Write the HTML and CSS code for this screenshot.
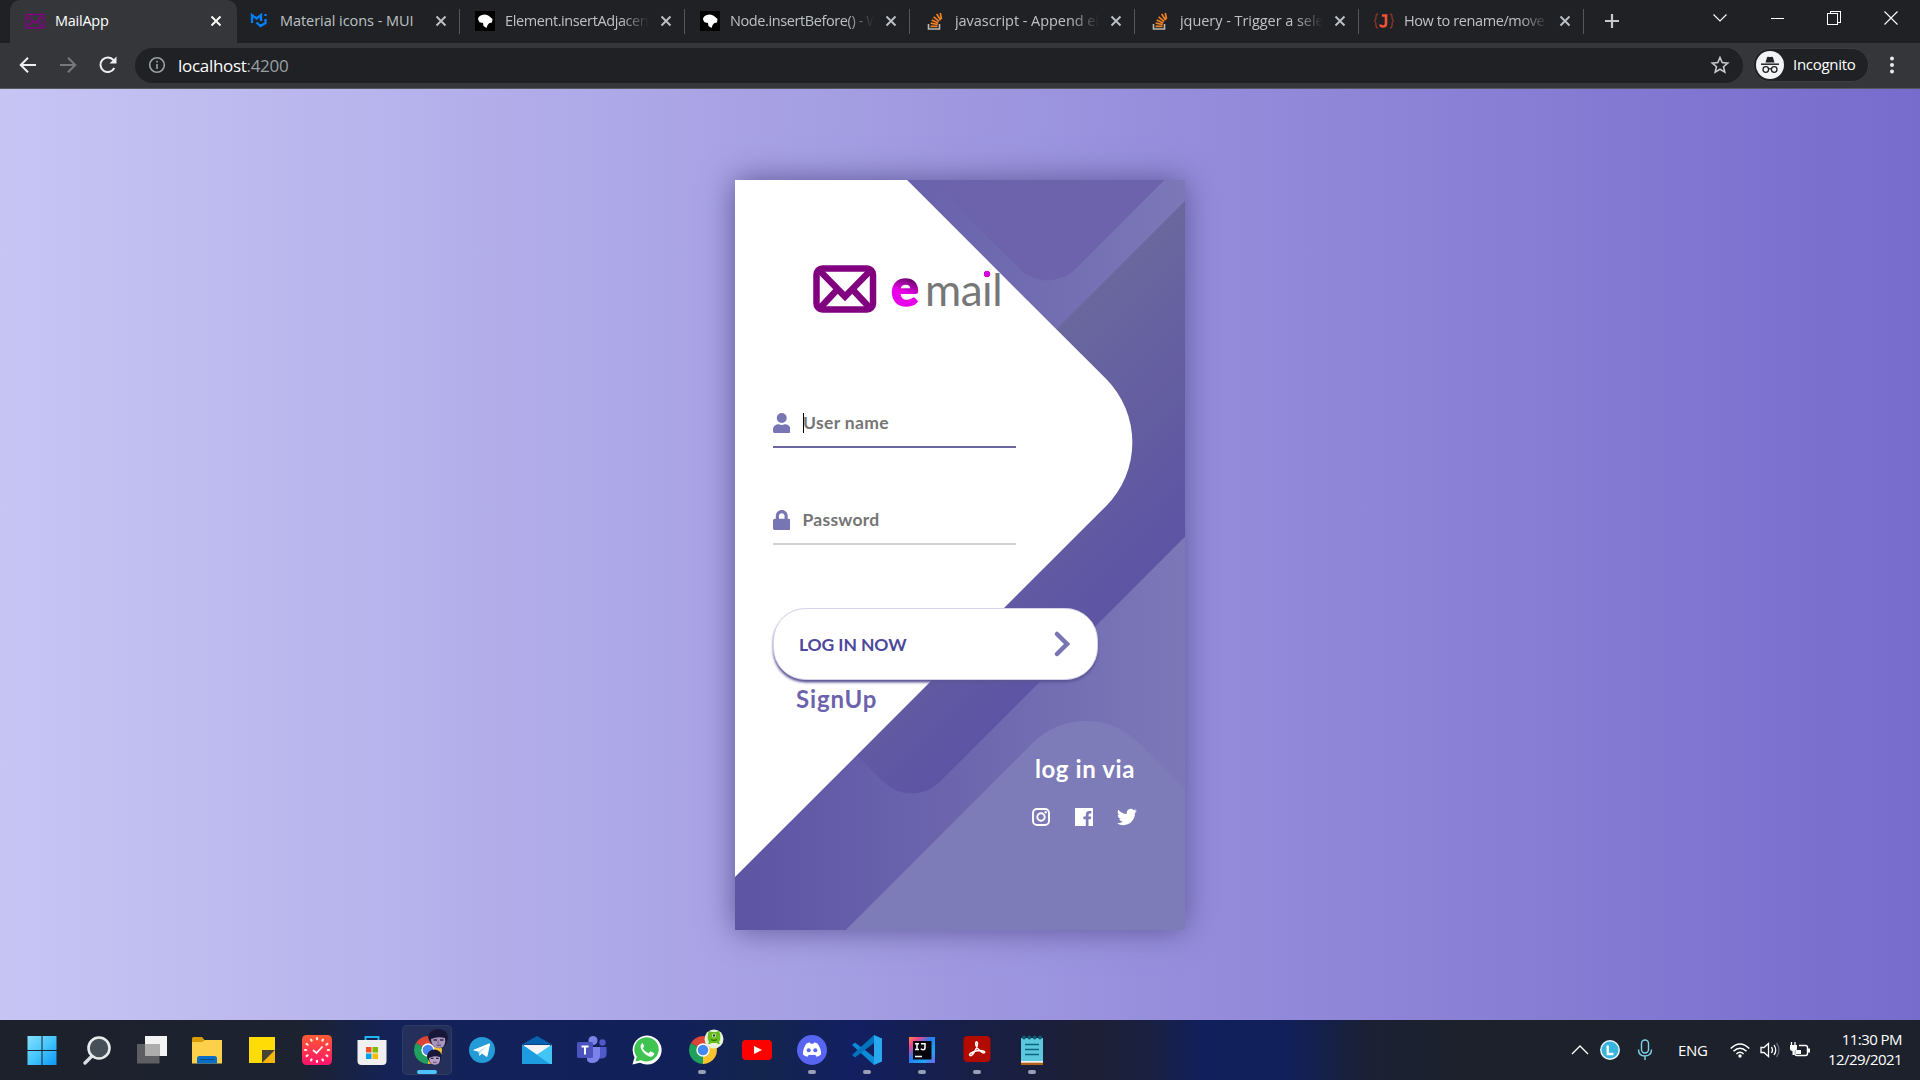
FILE: index.html
```
<!DOCTYPE html>
<html lang="en">
<head>
<meta charset="utf-8">
<title>MailApp</title>
<link rel="stylesheet" href="styles.css">
</head>
<body>
<svg width="0" height="0" class="defs" aria-hidden="true">
  <defs>
    <symbol id="x" viewBox="0 0 12 12"><path d="M1.5 1.5l9 9M10.5 1.5l-9 9" stroke="currentColor" stroke-width="1.9" fill="none"/></symbol>
    <symbol id="wp" viewBox="0 0 20 20"><path d="M0 0h20v20H0z" fill="#000"/><path d="M3 8.500Q3 5 7 4q4-1.500 7 1l3.500 3-.5 3.500-3 .8-1.500 2L11.500 17 8.500 15l-.5-3-3.500-.7z" fill="#fff"/></symbol>
    <symbol id="so" viewBox="0 0 20 20"><path d="M3.500 13v5h11v-5" fill="none" stroke="#bcbbbb" stroke-width="1.600"/><g stroke="#f48024" stroke-width="1.700" fill="none"><path d="M5.500 15.300h7M5.700 12.200l7 1.300M6.700 8.900l6.500 3M8.600 5.800l5.500 4.500M11.700 3l4 6.200M15.300 2l1.200 6"/></g></symbol>
    <symbol id="chrome" viewBox="0 0 30 30"><path d="M15 15L2.900 8A14 14 0 0 1 27.100 8z" fill="#dc4437"/><path d="M15 15L27.100 8A14 14 0 0 1 15 29z" fill="#fbc42f"/><path d="M15 15v14A14 14 0 0 1 2.900 8z" fill="#1fa15d"/><circle cx="15" cy="15" r="6.700" fill="#fff"/><circle cx="15" cy="15" r="5.300" fill="#4688f1"/></symbol>
  </defs>
</svg>

<header class="tabs">
  <div class="tab tab--active"><svg class="fav" viewBox="0 0 20 20"><g fill="none" stroke="#800080" stroke-width="1.600"><rect x="1" y="3.500" width="18" height="13.500" rx="2"/><path d="M3 5l7 7 7-7M3 15.500l4.500-5M17 15.500l-4.500-5"/></g></svg><span class="tab__title">MailApp</span><svg class="tab__x"><use href="#x"/></svg></div>
  <div class="tab"><svg class="fav" viewBox="0 0 20 20"><path d="M2 12V4l4.500 3.500L11 4v6M15.500 3v2M6.500 11.500l4 3.500 5-3V8M10.500 15v-2" fill="none" stroke="#007fff" stroke-width="2.300"/></svg><span class="tab__title tab__title--wide">Material icons - MUI</span><svg class="tab__x"><use href="#x"/></svg></div>
  <div class="tab"><svg class="fav"><use href="#wp"/></svg><span class="tab__title tab__title--fade">Element.insertAdjacen</span><svg class="tab__x"><use href="#x"/></svg></div>
  <div class="tab"><svg class="fav"><use href="#wp"/></svg><span class="tab__title tab__title--fade">Node.insertBefore() - W</span><svg class="tab__x"><use href="#x"/></svg></div>
  <div class="tab"><svg class="fav"><use href="#so"/></svg><span class="tab__title tab__title--fade tab__title--wide">javascript - Append el</span><svg class="tab__x"><use href="#x"/></svg></div>
  <div class="tab"><svg class="fav"><use href="#so"/></svg><span class="tab__title tab__title--fade tab__title--wide">jquery - Trigger a sele</span><svg class="tab__x"><use href="#x"/></svg></div>
  <div class="tab"><svg class="fav" viewBox="0 0 20 20"><g fill="none" stroke="#8c3325" stroke-width="1.400"><path d="M4 3Q2 3 2 6t-1.500 4Q2 11 2 14t2 3M16 3q2 0 2 3t1.500 4Q18 11 18 14t-2 3"/></g><path d="M8 4.500h5.500M12 4.500v8q0 3-3 3-2.500 0-2.500-2" fill="none" stroke="#f05033" stroke-width="2.600"/></svg><span class="tab__title tab__title--fade">How to rename/move</span><svg class="tab__x"><use href="#x"/></svg></div>
  <svg class="newtab" viewBox="0 0 16 16"><path d="M8 1v14M1 8h14" stroke="#c6c8cb" stroke-width="2.200"/></svg>
  <div class="winctl">
    <svg viewBox="0 0 16 16"><path d="M1.500 4.500L8 11l6.500-6.500" /></svg>
    <svg viewBox="0 0 16 16"><path d="M1.500 8.500h13" class="crisp"/></svg>
    <svg viewBox="0 0 16 16"><path d="M1.500 3.500h10v11h-10zM4.500 3.500v-2h10v11h-3" class="crisp"/></svg>
    <svg viewBox="0 0 16 16"><path d="M1.500 1.500l13 13M14.500 1.500l-13 13" /></svg>
  </div>
</header>

<nav class="toolbar">
  <svg class="nav-icon" viewBox="0 0 20 20"><path d="M18 10H3M10 2.700L2.700 10l7.300 7.300" stroke="#eceef0"/></svg>
  <svg class="nav-icon" viewBox="0 0 20 20"><path d="M2 10h15M10 2.700l7.300 7.300-7.300 7.300" stroke="#77787b"/></svg>
  <svg class="nav-icon" viewBox="0 0 20 20"><path d="M16.300 13A7.300 7.300 0 1 1 15.500 5.200L17 7" stroke="#eceef0"/><path d="M18.500 1.500v7h-7z" fill="#eceef0"/></svg>
  <div class="omnibox">
    <svg class="info" viewBox="0 0 18 18"><circle cx="9" cy="9" r="7.300"/><path d="M9 8v5M9 4.700v1.800"/></svg>
    <span class="url">localhost<span class="url__port">:4200</span></span>
    <svg class="star" viewBox="0 0 20 20"><path d="M10 2.500l2.200 5.100 5.500.5-4.200 3.600 1.300 5.400-4.800-2.900-4.800 2.900 1.300-5.400-4.200-3.600 5.500-.5z"/></svg>
  </div>
  <div class="incognito">
    <svg viewBox="0 0 28 28"><circle cx="14" cy="14" r="14" fill="#f1f3f4"/><path d="M9.500 11.500l1.500-5q.3-1 1.300-.7 1.700.6 3.400 0 1-.3 1.300.7l1.500 5z" fill="#202124"/><path d="M5 13.200h18" stroke="#202124" stroke-width="1.500"/><g fill="none" stroke="#202124" stroke-width="1.300"><circle cx="9.800" cy="18.500" r="2.800"/><circle cx="18.200" cy="18.500" r="2.800"/><path d="M12.600 18q1.400-.8 2.800 0"/></g></svg>
    <span>Incognito</span>
  </div>
  <svg class="dots" viewBox="0 0 6 20"><circle cx="3" cy="3.500" r="2"/><circle cx="3" cy="10" r="2"/><circle cx="3" cy="16.500" r="2"/></svg>
</nav>

<main class="page">
  <div class="screen">
    <svg class="screen__shapes" viewBox="0 0 360 600">
      <defs>
        <linearGradient id="band"><stop offset="0" stop-color="#6a679e"/><stop offset="1" stop-color="#5d54a4"/></linearGradient>
      </defs>
      <rect x="110" y="420" width="200" height="400" rx="60" fill="#7e7bb9" transform="rotate(45 210 620)"/>
      <rect x="170" y="-24" width="190" height="540" rx="32" fill="url(#band)" transform="rotate(45 265 246)"/>
      <rect x="140" y="-172" width="220" height="220" rx="32" fill="#6c63ac" transform="rotate(45 250 -62)"/>
      <path d="M-280-50H168A72 72 0 0 1 240 22V470H-280z" fill="#fff" transform="rotate(45 -20 210)"/>
    </svg>
    <div class="screen__content">
      <div class="logo">
        <svg class="logo__mark" viewBox="0 0 64 48"><rect x="3.500" y="3.500" width="56.500" height="41" rx="6" fill="none" stroke="#800080" stroke-width="6.500"/><path d="M7 6l25 25.500L57 6M7 43l16-17M57 43L41 26" fill="none" stroke="#800080" stroke-width="6.500"/></svg>
        <span class="logo__e">e</span><span class="logo__mail">ma<span class="logo__i">ı</span>l</span>
      </div>
      <form class="login">
        <label class="field field--focus">
          <svg viewBox="0 0 448 512"><path d="M224 256a128 128 0 1 0 0-256 128 128 0 0 0 0 256zm89.600 32h-16.700a174 174 0 0 1-145.800 0h-16.700C60.200 288 0 348.200 0 422.400V464c0 26.500 21.500 48 48 48h352c26.500 0 48-21.500 48-48v-41.600c0-74.200-60.200-134.400-134.400-134.400z"/></svg>
          <span class="caret"></span><span class="field__text">User name</span>
        </label>
        <label class="field">
          <svg viewBox="0 0 448 512"><path d="M400 224h-24v-72C376 68.200 307.800 0 224 0S72 68.200 72 152v72H48c-26.500 0-48 21.500-48 48v192c0 26.500 21.500 48 48 48h352c26.500 0 48-21.500 48-48V272c0-26.500-21.500-48-48-48zm-104 0H152v-72c0-39.700 32.300-72 72-72s72 32.300 72 72z"/></svg>
          <span class="field__text">Password</span>
        </label>
        <button type="button" class="submit"><span>Log in now</span><svg viewBox="0 0 16 26"><path d="M3 3l10 10L3 23"/></svg></button>
      </form>
      <a class="signup">SignUp</a>
      <div class="social">
        <h3>log in via</h3>
        <div class="social__icons">
          <svg viewBox="0 0 20 20"><g fill="none" stroke="#fff" stroke-width="1.900"><rect x="2" y="2" width="16" height="16" rx="4"/><circle cx="10" cy="10" r="3.700"/></g><circle cx="14.700" cy="5.300" r="1.200" fill="#fff"/></svg>
          <svg viewBox="0 0 20 20"><path d="M1 1h18v18h-4.500v-6.700h2.300l.4-2.700h-2.700V8q0-1.500 1.500-1.500h1.300V4h-2q-3.500 0-3.500 3.600v2H9.400v2.700h2.400V19H1z" fill="#fff"/></svg>
          <svg viewBox="0 0 24 24"><path d="M23.950 4.570a10 10 0 0 1-2.820.77 4.960 4.960 0 0 0 2.160-2.720c-.95.550-2 .950-3.130 1.180a4.920 4.920 0 0 0-8.380 4.480C7.690 8.090 4.070 6.130 1.640 3.160a4.920 4.920 0 0 0 1.520 6.570 4.900 4.900 0 0 1-2.230-.610v.060a4.920 4.920 0 0 0 3.950 4.830 5 5 0 0 1-2.210.080 4.940 4.940 0 0 0 4.600 3.420A9.870 9.870 0 0 1 0 19.540a14 14 0 0 0 7.550 2.210c9.050 0 14-7.500 14-13.980 0-.210 0-.420-.020-.630a9.940 9.940 0 0 0 2.420-2.570z" fill="#fff"/></svg>
        </div>
      </div>
    </div>
  </div>
</main>

<footer class="taskbar">
  <div class="apps">
    <div class="app"><svg viewBox="0 0 30 30"><defs><linearGradient id="win" x1="0" y1="0" x2="30" y2="30" gradientUnits="userSpaceOnUse"><stop stop-color="#8be2ff"/><stop offset=".5" stop-color="#45c6fb"/><stop offset="1" stop-color="#0c95f8"/></linearGradient></defs><path d="M.5 1h14v14H.5zM15.500 1h14v14h-14zM.5 16h14v14H.5zM15.500 16h14v14h-14z" fill="url(#win)"/></svg></div>
    <div class="app"><svg viewBox="0 0 30 30"><path d="M3 28l8-8" stroke="#dcdfe1" stroke-width="3.300" stroke-linecap="round"/><circle cx="17" cy="13" r="10.500" fill="#474f58" stroke="#e8eaec" stroke-width="2.600"/></svg></div>
    <div class="app"><svg viewBox="0 0 30 30"><path d="M8 1h22v20H8z" fill="#f3f3f3"/><path d="M0 9h22.500v19.500H0z" fill="#5c5e61"/><path d="M8 9h14.500v12H8z" fill="#adadad"/></svg></div>
    <div class="app"><svg viewBox="0 0 30 30"><path d="M0 3.500Q0 2 1.500 2H10l3 3.500V9H0z" fill="#d99b06"/><path d="M0 7h10l3-2h17v23.500H0z" fill="#fdd04c"/><path d="M5 28.500v-5q0-2.500 2.500-2.500h15q2.500 0 2.500 2.500v5z" fill="#0a6fc4"/><path d="M8 24.500h14" stroke="#064b8e"/></svg></div>
    <div class="app"><svg viewBox="0 0 30 30"><path d="M2 2h26v13L15 28H2z" fill="#ffdc05"/><path d="M15 15h13L15 28z" fill="#474334"/><path d="M28 15v13H15z" fill="#f4b60a"/></svg></div>
    <div class="app"><svg viewBox="0 0 30 30"><defs><linearGradient id="clk" x1="0" y1="0" x2="0" y2="1"><stop stop-color="#ff5b30"/><stop offset="1" stop-color="#ff126b"/></linearGradient></defs><rect width="30" height="30" rx="4.500" fill="url(#clk)"/><g stroke="#ffe9e6" stroke-width="2.200" stroke-linecap="round"><path d="M15 3v1.200M15 25.800V27M3 15h1.200M25.800 15H27M9 4.600l.6 1M20.400 24.400l.6 1M21 4.600l-.6 1M9.600 24.400l-.6 1M4.600 9l1 .6M24.400 20.400l1 .6M25.400 9l-1 .6M5.600 20.400l-1 .6"/></g><path d="M11 15l3.500 3 6-6.500" fill="none" stroke="#fff" stroke-width="1.700"/></svg></div>
    <div class="app"><svg viewBox="0 0 30 30"><path d="M8.500 6V2h13v4" fill="none" stroke="#23b4f2" stroke-width="2"/><path d="M.5 5h29v21q0 4-4 4h-21q-4 0-4-4z" fill="#f0f0f0"/><path d="M9 12h5.500v5.500H9z" fill="#f25022"/><path d="M15.500 12H21v5.500h-5.500z" fill="#7fba00"/><path d="M9 18.500h5.500V24H9z" fill="#05a0e6"/><path d="M15.500 18.500H21V24h-5.500z" fill="#ffb900"/></svg></div>
    <div class="app app--active"><svg class="wide" viewBox="0 0 40 40"><use href="#chrome" x="3" y="5" width="30" height="30"/><g><path d="M18 7q2-8 11-8 9 1 9 9l-2 7q-4 5-11 2-5-3-7-10z" fill="#18173a"/><path d="M21 9q6-3 14-1 1 6-2 9-4 2-8 0-4-3-4-8z" fill="#a795bb"/><path d="M23.500 10h3.500M30 10h3.500" stroke="#302649" stroke-width="1.400"/><path d="M28.500 10.500l-.7 2.500h1.500" fill="none" stroke="#7d668e"/><path d="M26.500 15.200h4.500" stroke="#684b75" stroke-width="1.200"/></g><g><path d="M17 26q1-6 7-6.500 7 0 7.500 6.500l-1.500 6q-3 3.500-8 2-4-2-5-8z" fill="#18173a"/><path d="M19 28q5-3 11-1 .5 5-2 7-3 1.500-6 0-3-2-3-6z" fill="#b5a1c4"/><path d="M20.800 28.300h2.700M26 28.300h2.700" stroke="#302649" stroke-width="1.200"/><path d="M23 32.300h3.500" stroke="#684b75"/></g></svg></div>
    <div class="app"><svg viewBox="0 0 30 30"><circle cx="15" cy="15" r="13" fill="#229bd6"/><path d="M6.500 14.700L22 8.500q1.300-.3 1 1L20.500 21q-.4 1.300-1.500.6l-4-3-2 2q-.6.500-.8-.4l-.7-3.500-4.800-1.300q-.8-.3-.2-.7z" fill="#fff"/><path d="M11.500 16.500l8-5.300-6 6-.7 3" fill="#b9dcef"/></svg></div>
    <div class="app"><svg viewBox="0 0 30 30"><path d="M0 9.500L15 1l15 8.500z" fill="#0763af"/><path d="M2 10h26v12H2z" fill="#f4f4f4"/><path d="M0 9.500l15 10 15-10V29H0z" fill="#42c5f4"/><path d="M0 9.500L28 29H0z" fill="#1d9de0"/></svg></div>
    <div class="app"><svg viewBox="0 0 30 30"><circle cx="16" cy="5.500" r="4.500" fill="#7b83eb"/><circle cx="25.500" cy="7.500" r="3.200" fill="#5059c9"/><path d="M21 12h8.500v7q0 4-4.500 4.500h-4z" fill="#5059c9"/><path d="M10 12h13v9q-1 7-7.500 7T10 22z" fill="#7b83eb"/><rect y="7" width="16" height="16" rx="1.500" fill="#4b53bc"/><path d="M4.500 11.500h7M8 11.500v8" stroke="#fff" stroke-width="2"/></svg></div>
    <div class="app"><svg viewBox="0 0 30 30"><path d="M.5 29.500l2-7.300A14.500 14.500 0 1 1 8 27.700z" fill="#fff"/><path d="M3.500 26.500l1.300-4.700A12.200 12.200 0 1 1 9 25.300z" fill="#3fc351"/><path d="M10.500 8q-2.500 1.500-1.700 5 2.500 6.500 9 8.700 4 .5 4.500-3.400l-3.800-2-2 2q-4-1.500-5.800-5l1.500-1.800L10.700 8z" fill="#fff"/></svg></div>
    <div class="app app--open"><svg class="wide" viewBox="0 0 40 40"><use href="#chrome" x="3" y="5" width="30" height="30"/><circle cx="29" cy="9" r="9.500" fill="#e8f3dc"/><path d="M23 4l1-3 3 1h4l3-1 1 3q1 5-1 8l1 2h-2l-1-1h-6l-1 1h-2l1-2q-2-3-1-8z" fill="#65bd1f"/><circle cx="29" cy="5.500" r="1.900" fill="#fff"/><circle cx="29" cy="5.500" r="1.200" fill="#153e12"/><path d="M26 9.700q3 1.500 6 0" fill="none" stroke="#245b13"/></svg></div>
    <div class="app"><svg viewBox="0 0 30 30"><rect y="5" width="30" height="20" rx="4" fill="#f00"/><path d="M12 11l8 4-8 4z" fill="#fff"/></svg></div>
    <div class="app app--open"><svg viewBox="0 0 30 30"><circle cx="15" cy="15" r="15" fill="#5865f2"/><path d="M9.500 8.500q2-1 3.500-1l.7 1.200h2.600L17 7.500q2 .1 3.500 1 4 5.500 3.500 11-2 1.700-4.500 2.200l-1.300-2q-3.200.8-6.400 0l-1.300 2Q8 21.200 6 19.500 5.700 13.500 9.500 8.500z" fill="#fff"/><circle cx="11.700" cy="15.200" r="2" fill="#5865f2"/><circle cx="18.300" cy="15.200" r="2" fill="#5865f2"/></svg></div>
    <div class="app app--open"><svg viewBox="0 0 30 30"><path d="M0 10l3-2.500L22 22v8L0 10z" fill="#0b8ad8"/><path d="M0 20L22 0v8L3 22.500z" fill="#0074bd"/><path d="M22 0l8 3.500v23L22 30z" fill="#28a9ef"/></svg></div>
    <div class="app app--open"><svg viewBox="0 0 30 30"><defs><linearGradient id="ij" x1="0" y1="0" x2="1" y2="1"><stop stop-color="#ff8a3c"/><stop offset=".2" stop-color="#f0448c"/><stop offset=".45" stop-color="#237ef0"/><stop offset=".75" stop-color="#20a5f6"/><stop offset="1" stop-color="#7a5cf2"/></linearGradient></defs><path d="M2 2h26v26H2z" fill="url(#ij)"/><path d="M6 6h18.500v18.500H6z" fill="#08040c"/><path d="M8 8.700h4M10 8.700v6M8 14.500h4M14 8.700h4v4q0 2-2 2-1.500 0-2-1M8 21.500h7" fill="none" stroke="#fff" stroke-width="1.500"/></svg></div>
    <div class="app app--open"><svg viewBox="0 0 30 30"><rect x="1.500" y="1" width="27" height="26" rx="4" fill="#b30b00"/><path d="M8 20.500q-1.500-1 2-3 5-2.500 10-1.800 3.500.7 2.500 2-1.500 1-4.500-1.700-4.500-4-4.300-8 .7-2.500 1.800 0 .2 4-3.500 9.500-2.500 4-4 3z" fill="none" stroke="#fff" stroke-width="1.500"/></svg></div>
    <div class="app app--open"><svg viewBox="0 0 30 30"><path d="M4 25h22v5H4z" fill="#b5611c"/><path d="M4 3h22v23H4z" fill="#5cc8dd"/><path d="M4 26h22v1.700H4z" fill="#f2f2f2"/><path d="M8 9.500h14M8 14.500h14M8 19.500h14" stroke="#0b6480" stroke-width="1.700"/><g fill="#0e5c74"><circle cx="7" cy="2.500" r="1.900"/><circle cx="12.300" cy="2.500" r="1.900"/><circle cx="17.700" cy="2.500" r="1.900"/><circle cx="23" cy="2.500" r="1.900"/></g></svg></div>
  </div>
  <div class="tray">
    <svg class="tray__up" viewBox="0 0 18 20"><path d="M1 14l8-8 8 8" fill="none" stroke="#fff" stroke-width="1.300"/></svg>
    <svg class="tray__l" viewBox="0 0 20 20"><circle cx="10" cy="10" r="9.200" fill="#37b5dc" stroke="#e8f6fb" stroke-width="1.500"/><path d="M7.700 5.500v8.500h5.800" fill="none" stroke="#fff" stroke-width="2.300"/></svg>
    <svg class="tray__mic" viewBox="0 0 16 22"><g fill="none" stroke="#7fd4e8" stroke-width="1.400"><rect x="4.500" y="1" width="7" height="13" rx="3.500"/><path d="M1.500 10.500q0 6.500 6.500 6.500t6.500-6.500M8 17v4"/></g></svg>
    <span class="tray__lang">ENG</span>
    <svg class="tray__wifi" viewBox="0 0 20 18"><g fill="none" stroke="#fff" stroke-width="1.500"><path d="M.7 7.500q9.300-9 18.600 0M3.500 10.300q6.500-6.200 13 0M6.400 13q3.600-3.500 7.200 0"/></g><circle cx="10" cy="15" r="1.700" fill="#fff"/></svg>
    <svg class="tray__vol" viewBox="0 0 20 18"><g fill="none" stroke="#fff" stroke-width="1.300"><path d="M1 6.500h3l4.500-4v13l-4.500-4H1zM11.500 6q2 3 0 6M14 4q3.500 5 0 10"/><path d="M16.500 2q5 7 0 14" stroke="#626770"/></g></svg>
    <svg class="tray__bat" viewBox="0 0 20 18"><path d="M9 4.500h6.500q2 0 2 2v6q0 2-2 2H7q-2 0-2-2V10" fill="none" stroke="#fff" stroke-width="1.400"/><path d="M18 7.500h2v4h-2zM6 9h5v4H6z" fill="#fff"/><path d="M1.500 1v4M5 1v4" stroke="#fff" stroke-width="1.300"/><path d="M0 4h7v4q0 2-2.500 2v4h-2v-4Q0 10 0 8z" fill="#fff"/></svg>
    <div class="clock"><span>11:30 PM</span><span>12/29/2021</span></div>
  </div>
</footer>
</body>
</html>
```
FILE: styles.css
```
* { box-sizing: border-box; }
body {
  margin: 0;
  width: 1920px;
  height: 1080px;
  overflow: hidden;
  display: flex;
  flex-direction: column;
  font-family: "Open Sans", "Noto Sans", sans-serif;
  background: #202124;
}
svg { display: block; flex: none; }
.defs { display: none; }

/* tab strip */
.tabs { height: 43px; display: flex; align-items: flex-start; padding-left: 10px; background: #202124; }
.tab {
  width: 225px;
  height: 43px;
  padding: 0 13px 1px 15px;
  display: flex;
  align-items: center;
  color: #bdc1c6;
  font-size: 14.5px;
}
.tab:nth-child(6) { width: 224px; }
.tab:not(.tab--active) { background: linear-gradient(#55575b, #55575b) right 0 top 9px / 1px 25px no-repeat; }
.tab--active {
  width: 227px;
  padding-right: 15px;
  margin-right: -2px;
  color: #fff;
  background: #35363a;
  border-radius: 10px 10px 0 0;
}
.fav { width: 20px; height: 20px; margin-right: 10px; }
.tab__title {
  flex: 1;
  min-width: 0;
  margin-top: -1px;
  white-space: nowrap;
  letter-spacing: -0.25px;
}
.tab__title--fade {
  letter-spacing: -0.4px;
  mask-image: linear-gradient(90deg, #000 calc(100% - 28px), transparent);
}
.tab__title--wide { letter-spacing: -0.05px; }
.tab__x { width: 12px; height: 12px; margin-left: 11px; }
.newtab { width: 16px; height: 16px; margin: 13px 0 0 20px; }
.winctl { margin: 10px 21px 0 auto; display: flex; gap: 41px; }
.winctl svg { width: 16px; height: 16px; }
.winctl path { fill: none; stroke: #fff; stroke-width: 1.1; }
.crisp { shape-rendering: crispEdges; }

/* address bar */
.toolbar {
  height: 46px;
  padding: 0 25px 1px 18px;
  display: flex;
  align-items: center;
  background: #35363a;
  border-bottom: 1px solid #57585c;
}
.nav-icon { width: 20px; height: 20px; margin-right: 20px; }
.nav-icon path { stroke-width: 2; fill: none; }
.nav-icon path[fill] { fill: #eceef0; }
.nav-icon:nth-child(3) { margin-right: 17px; }
.omnibox {
  width: 1608px;
  height: 35px;
  padding: 0 13px;
  display: flex;
  align-items: center;
  border-radius: 18px;
  background: #202124;
}
.info { width: 18px; height: 18px; fill: none; stroke: #9aa0a6; stroke-width: 1.6; }
.url { margin: 0 0 0 12px; color: #fff; font-size: 17px; letter-spacing: -0.3px; }
.url__port { color: #9aa0a6; }
.star { width: 20px; height: 20px; margin-left: auto; fill: none; stroke: #c6c8cb; stroke-width: 1.6; }
.incognito {
  width: 116px;
  height: 34px;
  margin-left: 10px;
  padding-left: 2px;
  display: flex;
  align-items: center;
  gap: 9px;
  border-radius: 17px;
  border: 1px solid #3c3d41;
  background: #202124;
  color: #fff;
  font-size: 15px;
  letter-spacing: -0.3px;
}
.incognito svg { width: 28px; height: 28px; }
.incognito span { margin-top: -2px; }
.dots { width: 6px; height: 20px; margin-left: auto; fill: #e8eaed; }

/* page */
.page {
  height: 931px;
  padding-top: 1px;
  display: grid;
  place-items: center;
  background: linear-gradient(90deg, #c7c5f4, #776bcc);
}
.screen {
  width: 450px;
  height: 750px;
  display: grid;
  background: linear-gradient(90deg, #5d54a4, #7c78b8);
  box-shadow: 0 0 30px #5c5696;
}
.screen__shapes, .screen__content { grid-area: 1 / 1; width: 450px; height: 750px; }
.screen__content {
  display: flex;
  flex-direction: column;
  align-items: flex-start;
  font-family: Lato, sans-serif;
  font-weight: 700;
}
.logo { display: flex; align-items: flex-start; height: 130px; padding: 85px 0 0 78px; line-height: 48px; }
.logo__mark { width: 64px; height: 48px; }
.logo__e {
  width: 28px;
  margin: -6px 0 0 14px;
  font: 900 52px/54px Lato, sans-serif;
  background: linear-gradient(200deg, #6a006a 36%, #e800e8 60%);
  background-clip: text;
  color: transparent;
  -webkit-text-stroke: 1.5px transparent;
}
.logo__mail { margin-left: 6px; font: 400 44px/48px Lato, sans-serif; color: #777; letter-spacing: -0.5px; }
.logo__i { background: radial-gradient(circle at 50% 11px, #d800d8 3px, transparent 3.6px); }

.login { width: 325px; margin: 88px 0 0 38px; }
.field {
  width: 243px;
  height: 50px;
  margin-bottom: 47px;
  padding-top: 1px;
  display: flex;
  align-items: center;
  border-bottom: 2px solid #d1d1d4;
  color: #757575;
  font-size: 17.5px;
  letter-spacing: 0.25px;
}
.field--focus { border-color: #6a679e; letter-spacing: 0.35px; }
.field svg { width: 17.500px; height: 20px; margin-left: -0.5px; fill: #7875b5; }
.field__text { margin-left: 12.5px; }
.caret { width: 1px; height: 20px; margin: 0 -13.5px 0 13px; background: #000; }
.submit {
  width: 325px;
  height: 72px;
  margin-top: 63px;
  padding: 0 27px 0 25px;
  display: flex;
  align-items: center;
  justify-content: space-between;
  border: 1px solid #d4d3e8;
  border-radius: 32.500px;
  background: #fff;
  box-shadow: 0 2.500px 2.500px #5c5696;
  color: #4c489d;
  font: 700 17.500px Lato, sans-serif;
  letter-spacing: -0.1px;
  text-transform: uppercase;
}
.submit svg { width: 16px; height: 26px; fill: none; stroke: #7875b5; stroke-width: 4.500; stroke-linecap: round; }
.signup { margin: 4px 0 0 61px; font-size: 24px; line-height: 30px; letter-spacing: 0.9px; color: #6c63ac; }
.social { width: 200px; margin: auto 0 0 auto; height: 175px; text-align: center; color: #fff; }
.social h3 { margin: 0; font-size: 24px; line-height: 28px; letter-spacing: 0.6px; }
.social__icons { display: flex; justify-content: center; gap: 23px; margin: 24px 2px 0 0; }
.social__icons svg { width: 20px; height: 20px; }

/* taskbar */
.taskbar {
  height: 60px;
  display: flex;
  justify-content: space-between;
  background: linear-gradient(90deg, #1c212b 0, #1c2230 300px, #14225a 400px, #12205a 680px, #14254c 760px, #121f62 850px, #181f48 960px, #1c1f35 1090px, #1a2040 1150px, #11205c 1200px, #11205a 1290px, #1b2033 1370px, #1c212b 1480px);
}
.apps { display: flex; padding: 5px 0 5px 17px; }
.app {
  width: 50px;
  height: 50px;
  margin-right: 5px;
  padding-top: 10px;
  display: flex;
  flex-direction: column;
  align-items: center;
  border-radius: 5px;
}
.app svg { width: 30px; height: 30px; }
.app .wide { width: 40px; height: 40px; margin: -5px 0 -5px 5px; overflow: visible; }
.app--active { background: #24305a; box-shadow: inset 0 0 0 1px #303b62; }
.app--active::after, .app--open::after { content: ""; width: 8px; height: 4px; margin-top: 5px; border-radius: 2px; background: #9a9fb8; }
.app--active::after { width: 20px; background: #4cc2ff; }
.tray { display: flex; align-items: center; padding-right: 18px; color: #fff; font-size: 15px; letter-spacing: -0.3px; }
.tray__up { width: 18px; height: 20px; }
.tray__l { width: 20px; height: 20px; margin-left: 11px; }
.tray__mic { width: 16px; height: 22px; margin-left: 17px; }
.tray__lang { margin-left: 25px; width: 30px; }
.tray__wifi { width: 20px; height: 18px; margin-left: 22px; }
.tray__vol { width: 20px; height: 18px; margin-left: 10px; }
.tray__bat { width: 20px; height: 18px; margin-left: 10px; }
.clock { width: 92px; display: flex; flex-direction: column; align-items: flex-end; margin-top: -2px; line-height: 20px; letter-spacing: -0.55px; }
```
